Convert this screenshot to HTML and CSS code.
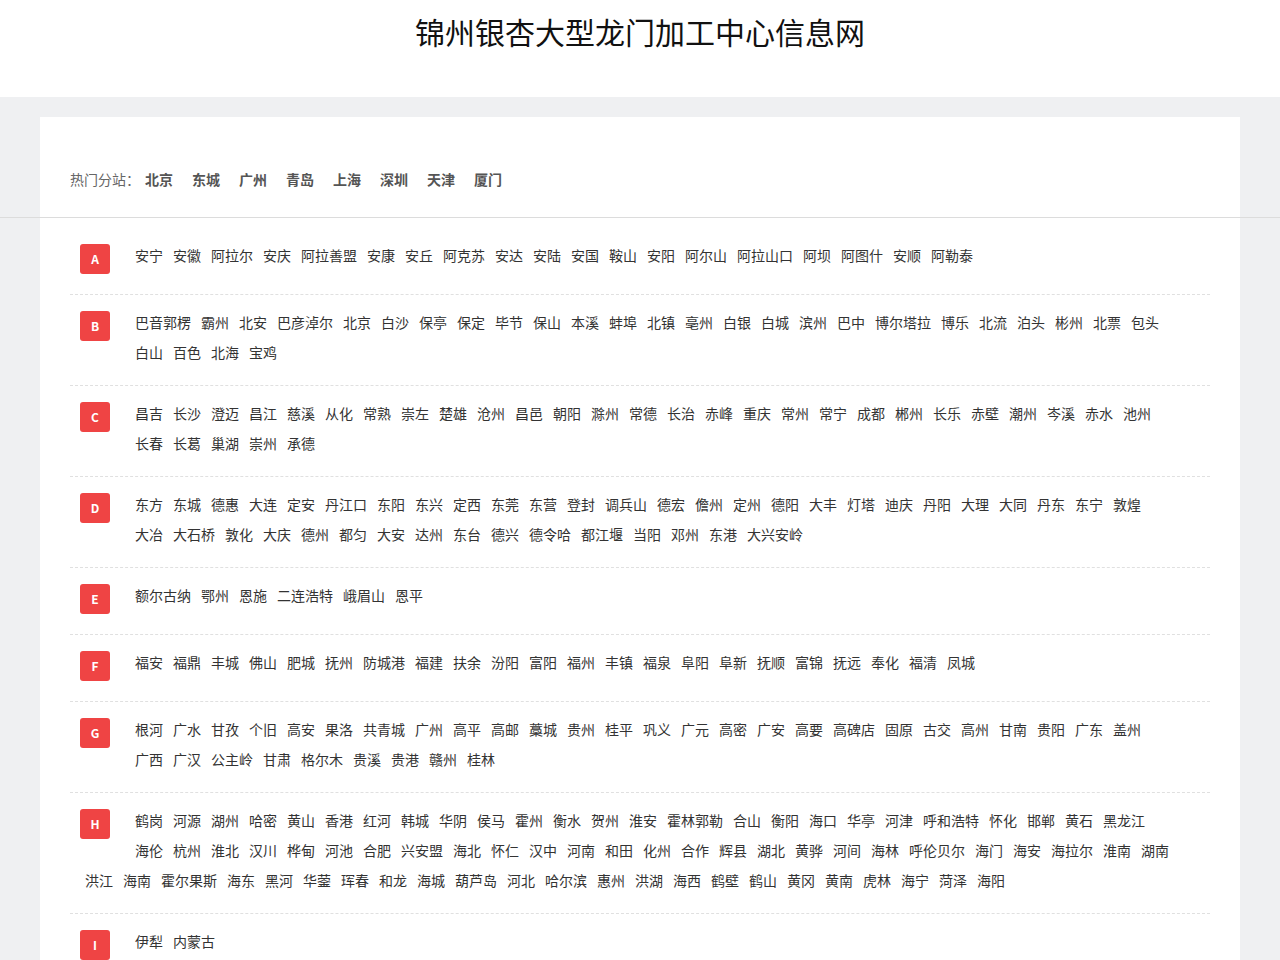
FILE: index.html
```html
<!DOCTYPE html>
<html lang="zh-CN">
<head>
    <meta charset="UTF-8">
    <meta name="viewport" content="width=device-width, initial-scale=1.0">
    <title>锦州银杏大型龙门加工中心信息网</title>
    <link rel="stylesheet" href="styles.css">
</head>
<body>

    <header class="site-head">
        <h1>锦州银杏大型龙门加工中心信息网</h1>
    </header>

    <main class="page">
        <!-- 热门分站 -->
        <div class="card hot">
            <span class="hot-label">热门分站：</span><a href="#">北京</a><a href="#">东城</a><a href="#">广州</a><a href="#">青岛</a><a href="#">上海</a><a href="#">深圳</a><a href="#">天津</a><a href="#">厦门</a>
        </div>

        <div class="divider"></div>

        <!-- 按字母排序的城市 -->
        <div class="card letters">
            <div class="row"><span class="badge">A</span><a href="#">安宁</a><a href="#">安徽</a><a href="#">阿拉尔</a><a href="#">安庆</a><a href="#">阿拉善盟</a><a href="#">安康</a><a href="#">安丘</a><a href="#">阿克苏</a><a href="#">安达</a><a href="#">安陆</a><a href="#">安国</a><a href="#">鞍山</a><a href="#">安阳</a><a href="#">阿尔山</a><a href="#">阿拉山口</a><a href="#">阿坝</a><a href="#">阿图什</a><a href="#">安顺</a><a href="#">阿勒泰</a></div>

            <div class="row"><span class="badge">B</span><a href="#">巴音郭楞</a><a href="#">霸州</a><a href="#">北安</a><a href="#">巴彦淖尔</a><a href="#">北京</a><a href="#">白沙</a><a href="#">保亭</a><a href="#">保定</a><a href="#">毕节</a><a href="#">保山</a><a href="#">本溪</a><a href="#">蚌埠</a><a href="#">北镇</a><a href="#">亳州</a><a href="#">白银</a><a href="#">白城</a><a href="#">滨州</a><a href="#">巴中</a><a href="#">博尔塔拉</a><a href="#">博乐</a><a href="#">北流</a><a href="#">泊头</a><a href="#">彬州</a><a href="#">北票</a><a href="#">包头</a><a href="#">白山</a><a href="#">百色</a><a href="#">北海</a><a href="#">宝鸡</a></div>

            <div class="row"><span class="badge">C</span><a href="#">昌吉</a><a href="#">长沙</a><a href="#">澄迈</a><a href="#">昌江</a><a href="#">慈溪</a><a href="#">从化</a><a href="#">常熟</a><a href="#">崇左</a><a href="#">楚雄</a><a href="#">沧州</a><a href="#">昌邑</a><a href="#">朝阳</a><a href="#">滁州</a><a href="#">常德</a><a href="#">长治</a><a href="#">赤峰</a><a href="#">重庆</a><a href="#">常州</a><a href="#">常宁</a><a href="#">成都</a><a href="#">郴州</a><a href="#">长乐</a><a href="#">赤壁</a><a href="#">潮州</a><a href="#">岑溪</a><a href="#">赤水</a><a href="#">池州</a><a href="#">长春</a><a href="#">长葛</a><a href="#">巢湖</a><a href="#">崇州</a><a href="#">承德</a></div>

            <div class="row"><span class="badge">D</span><a href="#">东方</a><a href="#">东城</a><a href="#">德惠</a><a href="#">大连</a><a href="#">定安</a><a href="#">丹江口</a><a href="#">东阳</a><a href="#">东兴</a><a href="#">定西</a><a href="#">东莞</a><a href="#">东营</a><a href="#">登封</a><a href="#">调兵山</a><a href="#">德宏</a><a href="#">儋州</a><a href="#">定州</a><a href="#">德阳</a><a href="#">大丰</a><a href="#">灯塔</a><a href="#">迪庆</a><a href="#">丹阳</a><a href="#">大理</a><a href="#">大同</a><a href="#">丹东</a><a href="#">东宁</a><a href="#">敦煌</a><a href="#">大冶</a><a href="#">大石桥</a><a href="#">敦化</a><a href="#">大庆</a><a href="#">德州</a><a href="#">都匀</a><a href="#">大安</a><a href="#">达州</a><a href="#">东台</a><a href="#">德兴</a><a href="#">德令哈</a><a href="#">都江堰</a><a href="#">当阳</a><a href="#">邓州</a><a href="#">东港</a><a href="#">大兴安岭</a></div>

            <div class="row"><span class="badge">E</span><a href="#">额尔古纳</a><a href="#">鄂州</a><a href="#">恩施</a><a href="#">二连浩特</a><a href="#">峨眉山</a><a href="#">恩平</a></div>

            <div class="row"><span class="badge">F</span><a href="#">福安</a><a href="#">福鼎</a><a href="#">丰城</a><a href="#">佛山</a><a href="#">肥城</a><a href="#">抚州</a><a href="#">防城港</a><a href="#">福建</a><a href="#">扶余</a><a href="#">汾阳</a><a href="#">富阳</a><a href="#">福州</a><a href="#">丰镇</a><a href="#">福泉</a><a href="#">阜阳</a><a href="#">阜新</a><a href="#">抚顺</a><a href="#">富锦</a><a href="#">抚远</a><a href="#">奉化</a><a href="#">福清</a><a href="#">凤城</a></div>

            <div class="row"><span class="badge">G</span><a href="#">根河</a><a href="#">广水</a><a href="#">甘孜</a><a href="#">个旧</a><a href="#">高安</a><a href="#">果洛</a><a href="#">共青城</a><a href="#">广州</a><a href="#">高平</a><a href="#">高邮</a><a href="#">藁城</a><a href="#">贵州</a><a href="#">桂平</a><a href="#">巩义</a><a href="#">广元</a><a href="#">高密</a><a href="#">广安</a><a href="#">高要</a><a href="#">高碑店</a><a href="#">固原</a><a href="#">古交</a><a href="#">高州</a><a href="#">甘南</a><a href="#">贵阳</a><a href="#">广东</a><a href="#">盖州</a><a href="#">广西</a><a href="#">广汉</a><a href="#">公主岭</a><a href="#">甘肃</a><a href="#">格尔木</a><a href="#">贵溪</a><a href="#">贵港</a><a href="#">赣州</a><a href="#">桂林</a></div>

            <div class="row"><span class="badge">H</span><a href="#">鹤岗</a><a href="#">河源</a><a href="#">湖州</a><a href="#">哈密</a><a href="#">黄山</a><a href="#">香港</a><a href="#">红河</a><a href="#">韩城</a><a href="#">华阴</a><a href="#">侯马</a><a href="#">霍州</a><a href="#">衡水</a><a href="#">贺州</a><a href="#">淮安</a><a href="#">霍林郭勒</a><a href="#">合山</a><a href="#">衡阳</a><a href="#">海口</a><a href="#">华亭</a><a href="#">河津</a><a href="#">呼和浩特</a><a href="#">怀化</a><a href="#">邯郸</a><a href="#">黄石</a><a href="#">黑龙江</a><a href="#">海伦</a><a href="#">杭州</a><a href="#">淮北</a><a href="#">汉川</a><a href="#">桦甸</a><a href="#">河池</a><a href="#">合肥</a><a href="#">兴安盟</a><a href="#">海北</a><a href="#">怀仁</a><a href="#">汉中</a><a href="#">河南</a><a href="#">和田</a><a href="#">化州</a><a href="#">合作</a><a href="#">辉县</a><a href="#">湖北</a><a href="#">黄骅</a><a href="#">河间</a><a href="#">海林</a><a href="#">呼伦贝尔</a><a href="#">海门</a><a href="#">海安</a><a href="#">海拉尔</a><a href="#">淮南</a><a href="#">湖南</a><a href="#">洪江</a><a href="#">海南</a><a href="#">霍尔果斯</a><a href="#">海东</a><a href="#">黑河</a><a href="#">华蓥</a><a href="#">珲春</a><a href="#">和龙</a><a href="#">海城</a><a href="#">葫芦岛</a><a href="#">河北</a><a href="#">哈尔滨</a><a href="#">惠州</a><a href="#">洪湖</a><a href="#">海西</a><a href="#">鹤壁</a><a href="#">鹤山</a><a href="#">黄冈</a><a href="#">黄南</a><a href="#">虎林</a><a href="#">海宁</a><a href="#">菏泽</a><a href="#">海阳</a></div>

            <div class="row"><span class="badge">I</span><a href="#">伊犁</a><a href="#">内蒙古</a></div>
        </div>
    </main>

</body>
</html>
```

FILE: styles.css
```css
* {
    box-sizing: border-box;
}

body {
    margin: 0;
    font-family: "Noto Sans CJK SC", "Noto Sans", sans-serif;
    font-size: 14px;
    color: #333;
    background-color: #eff0f2;
}

a {
    text-decoration: none;
}

/* 顶部标题 */
.site-head {
    height: 97px;
    padding-top: 12px;
    background-color: #fff;
    text-align: center;
}
.site-head h1 {
    margin: 0;
    font-size: 30px;
    font-weight: normal;
    line-height: 38px;
    color: #111;
}

.page {
    padding-top: 20px;
}

.card {
    margin: 0 40px;
    background-color: #fff;
}

/* 热门分站 */
.hot {
    height: 100px;
    padding: 48px 30px 0;
    line-height: 28px;
    color: #666;
}
.hot a {
    font-weight: bold;
    color: #555;
    margin-right: 19px;
}
.hot-label {
    margin-right: 5px;
}

.divider {
    height: 1px;
    background-color: #dcdcdc;
}

/* 字母分组 */
.letters {
    padding: 10px 30px;
}
.row {
    display: flow-root;
    padding: 12px 30px 18px 10px;
    border-bottom: 1px dashed #e0e0e0;
    line-height: 30px;
}
.row:last-child {
    border-bottom: none;
}
.badge {
    float: left;
    width: 30px;
    height: 30px;
    margin: 4px 20px 2px 0;
    border-radius: 3px;
    background-color: #ef4444;
    color: #fff;
    font-size: 12px;
    font-weight: bold;
    line-height: 30px;
    text-align: center;
}
.row a {
    display: inline-block;
    margin: 0 5px;
    color: #333;
}
```
